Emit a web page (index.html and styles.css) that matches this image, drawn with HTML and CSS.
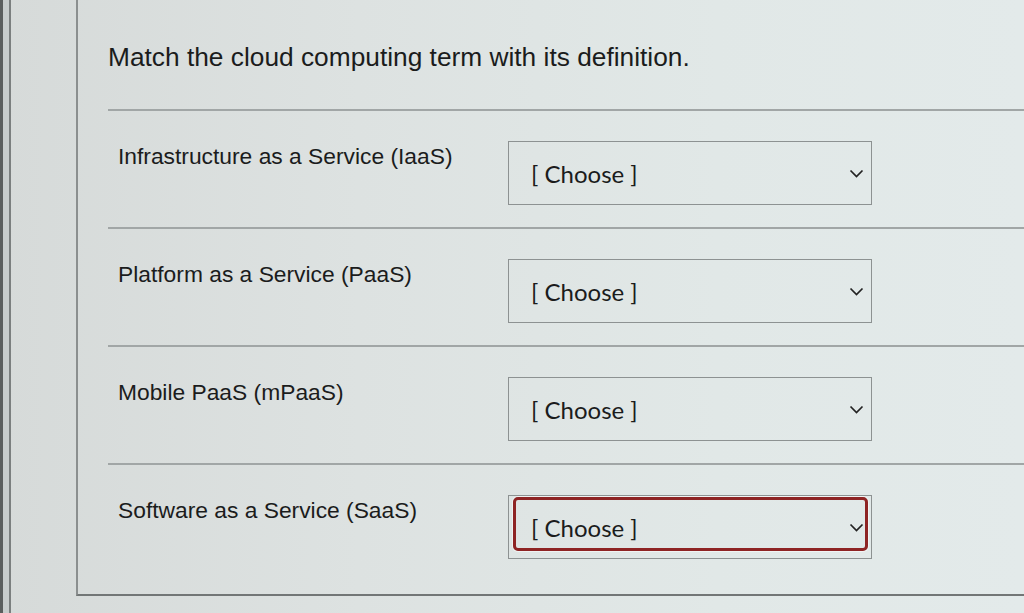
FILE: index.html
```html
<!DOCTYPE html>
<html lang="en">
<head>
    <meta charset="UTF-8">
    <meta name="viewport" content="width=device-width, initial-scale=1.0">
    <title>Matching Question</title>
    <link rel="stylesheet" href="styles.css">
</head>
<body>
    <div class="bezel"></div>
    <div class="page">
        <div class="panel">
            <div class="question-text">Match the cloud computing term with its definition.</div>

            <!-- answers -->
            <div class="match-row">
                <div class="term">Infrastructure as a Service (IaaS)</div>
                <div class="choice">
                    <span>[ Choose ]</span>
                    <svg class="chevron" width="15" height="9" viewBox="0 0 15 9"><path d="M1.5 1.5 L7.5 7.5 L13.5 1.5" fill="none" stroke="#222" stroke-width="1.7"/></svg>
                </div>
            </div>
            <div class="match-row">
                <div class="term">Platform as a Service (PaaS)</div>
                <div class="choice">
                    <span>[ Choose ]</span>
                    <svg class="chevron" width="15" height="9" viewBox="0 0 15 9"><path d="M1.5 1.5 L7.5 7.5 L13.5 1.5" fill="none" stroke="#222" stroke-width="1.7"/></svg>
                </div>
            </div>
            <div class="match-row">
                <div class="term">Mobile PaaS (mPaaS)</div>
                <div class="choice">
                    <span>[ Choose ]</span>
                    <svg class="chevron" width="15" height="9" viewBox="0 0 15 9"><path d="M1.5 1.5 L7.5 7.5 L13.5 1.5" fill="none" stroke="#222" stroke-width="1.7"/></svg>
                </div>
            </div>
            <div class="match-row">
                <div class="term">Software as a Service (SaaS)</div>
                <div class="choice focused">
                    <span>[ Choose ]</span>
                    <svg class="chevron" width="15" height="9" viewBox="0 0 15 9"><path d="M1.5 1.5 L7.5 7.5 L13.5 1.5" fill="none" stroke="#222" stroke-width="1.7"/></svg>
                </div>
            </div>
        </div>
    </div>
</body>
</html>
```

FILE: styles.css
```css
:root {
    --text: #1b1c1c;
    --rule: #a1a6a6;
    --box: #8d9292;
    --focus: #8e2424;
}

body {
    margin: 0;
    height: 613px;
    overflow: hidden;
    display: flex;
    font-family: "Liberation Sans", Arial, sans-serif;
    color: var(--text);
    background: linear-gradient(90deg, #d6dad9 0%, #dde2e1 35%, #e1e8e7 70%, #e3eaea 100%);
}

.bezel {
    width: 9px;
    flex-shrink: 0;
    background: linear-gradient(90deg, #5b5e5e 0 3px, #c8cccc 3px);
    border-right: 2px solid #7b7f7f;
}

.page {
    flex: 1;
    padding-left: 65px;
}

.panel {
    box-sizing: border-box;
    height: 596px;
    border-left: 2px solid #8b8f8f;
    border-bottom: 2px solid #727676;
    padding: 42px 0 0 30px;
}

.question-text {
    font-size: 26.3px;
    line-height: 30px;
    margin-bottom: 37px;
}

.match-row {
    display: grid;
    grid-template-columns: 400px 364px;
    align-items: start;
    border-top: 2px solid var(--rule);
    padding: 30px 0 22px 0;
}

.term {
    font-size: 22.8px;
    line-height: 26px;
    padding: 2px 0 0 10px;
}

.choice {
    position: relative;
    box-sizing: border-box;
    height: 64px;
    display: flex;
    align-items: center;
    justify-content: space-between;
    padding: 0 7px 0 22px;
    border: 1.5px solid var(--box);
    font-family: Lato, "Open Sans", sans-serif;
    font-size: 24px;
}

.choice span {
    margin-top: 1px;
}

.chevron {
    display: block;
    flex-shrink: 0;
}

.choice.focused::after {
    content: "";
    position: absolute;
    top: 1px;
    left: 4px;
    right: 3px;
    bottom: 7px;
    border: 3px solid var(--focus);
    border-radius: 5px;
    box-shadow: 0 0 0 1px rgba(255,255,255,0.5);
}
```
